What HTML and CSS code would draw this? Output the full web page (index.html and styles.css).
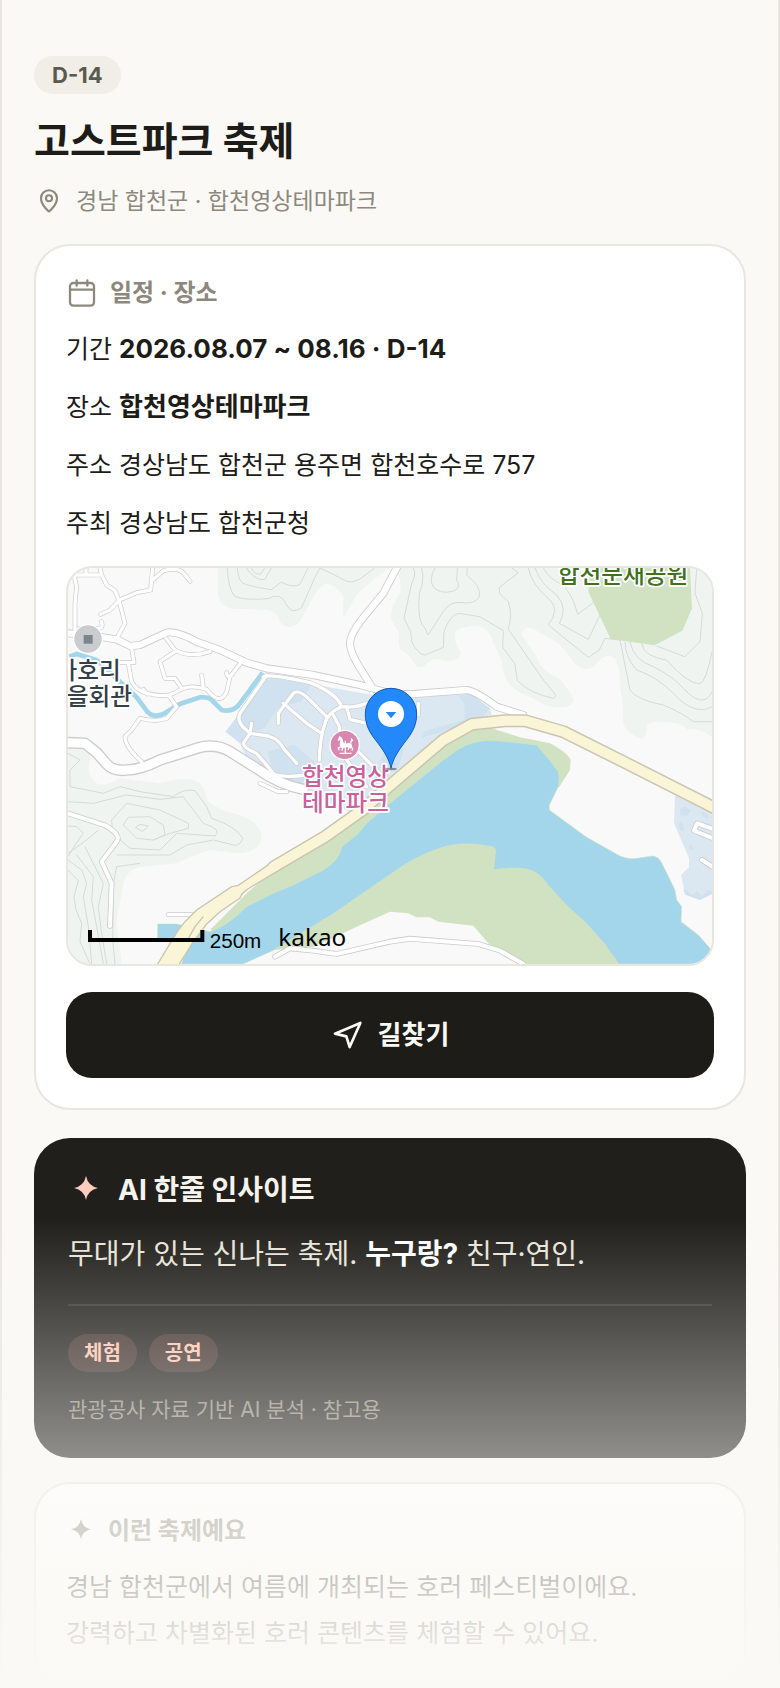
FILE: index.html
```html
<!DOCTYPE html>
<html lang="ko">
<head>
    <meta charset="UTF-8">
    <meta name="viewport" content="width=device-width, initial-scale=1.0">
    <title>고스트파크 축제</title>
    <link rel="stylesheet" href="styles.css">
</head>
<body>
    <main class="page">
        <header class="header">
            <span class="badge">D-14</span>
            <h1>고스트파크 축제</h1>
            <p class="location">
                <svg class="icon-pin" viewBox="0 0 24 24" aria-hidden="true">
                    <path d="M12 20.4s-6.4-4.9-6.4-10.6a6.4 6.4 0 0 1 12.8 0c0 5.700-6.400 10.600-6.400 10.600z"/>
                    <circle cx="12" cy="9.800" r="2.400"/>
                </svg>
                경남 합천군 · 합천영상테마파크
            </p>
        </header>

        <section class="card">
            <h2 class="card-title">
                <svg class="icon-line" viewBox="0 0 24 24" aria-hidden="true">
                    <rect x="3" y="4.500" width="18" height="17" rx="2.500"/>
                    <path d="M3 9.500h18M8 2.500v4M16 2.500v4"/>
                </svg>
                일정 · 장소
            </h2>
            <p>기간 <strong>2026.08.07 ~ 08.16 · D-14</strong></p>
            <p>장소 <strong>합천영상테마파크</strong></p>
            <p>주소 경상남도 합천군 용주면 합천호수로 757</p>
            <p>주최 경상남도 합천군청</p>

            <div class="map">
                <svg viewBox="0 0 1932 1188" preserveAspectRatio="xMidYMid slice" role="img" aria-label="지도">
                    <!-- 산지 -->
                    <g class="hill">
                        <path d="M450 0V80Q455 112 490 122L600 126Q625 130 630 150Q640 178 668 177Q690 175 705 145L736 86Q760 45 780 48Q810 55 826 86V150Q850 110 860 90Q890 50 966 0Z"/>
                        <path transform="translate(966 -24)" d="M15 24Q38 65 30 100Q-5 150 5 180L28 220Q20 260 40 275Q60 285 80 318Q95 330 110 310Q135 290 165 302Q215 305 212 275Q180 225 205 208Q240 195 262 198Q300 205 310 250L335 300Q340 360 365 380Q390 400 430 415Q470 445 510 442Q555 440 550 415Q530 375 500 350Q450 330 440 290L395 225Q405 190 430 208L490 240Q525 265 545 300Q585 350 620 310Q650 275 675 295Q692 330 690 380Q702 430 698 485Q710 520 750 535Q770 540 770 495Q790 480 830 487Q880 490 890 508Q930 505 966 530V24Z"/>
                        <path transform="translate(-24 576)" d="M24-60L60-45 90-10Q80 40 100 60Q120 90 180 55L300 70Q400 40 430 80L445 125Q480 150 520 160Q600 180 605 230Q600 280 530 280L450 270Q390 290 350 310L240 322Q190 330 185 400L170 480 185 612H24Z"/>
                    </g>
                    <g class="contour">
                        <path d="M478 0Q480 60 500 85Q530 98 600 92Q640 70 655 110Q670 140 700 120L740 30 756 0M508 0Q510 45 535 50Q570 60 610 65L640 42Q670 60 695 50L720 0M535 0Q560 38 590 35L610 0M550 0Q560 22 578 18L590 0M756 0Q800 20 825 35Q850 50 880 30L920 0"/>
                        <g transform="translate(966 -24)">
                            <path d="M70 24Q80 45 65 70L42 175 62 215 65 245Q85 285 105 285L160 262 162 215Q180 165 205 160L270 170 340 212 338 262 375 312 382 362Q420 400 490 415Q505 410 485 390L460 360 405 280 355 208Q368 165 355 125L328 100V82L385 38 365 24M135 24Q115 60 130 80Q150 105 190 93Q215 85 200 60L202 24M95 24Q105 60 88 100Q80 185 105 205L114 225 160 155Q180 125 210 127Q255 135 268 110Q275 80 230 45L232 24"/>
                            <path d="M415 24Q425 75 480 120Q510 150 475 195L595 292 628 270 645 235 690 240 720 390Q740 420 820 435Q880 460 910 485H966M435 24Q450 70 500 105Q535 145 508 190L595 238 630 165M460 24Q480 60 520 75Q550 110 563 163L610 128M705 245Q705 290 740 330Q800 350 850 400Q915 470 966 440M720 245Q730 300 790 320Q850 350 880 385Q940 450 966 395M755 250Q760 290 830 300Q890 370 930 372Q950 360 966 275M800 258L884 290 930 245 937 160 915 100 920 24"/>
                        </g>
                        <g transform="translate(-24 576)">
                            <path d="M24 -20L60 0 30 30V80L130 100 180 80 240 95 340 110Q370 85 405 92L440 140 455 175Q530 200 548 235Q540 260 520 255L460 240 380 255 330 285 170 285M24 125L100 130 200 105 300 118 370 110 430 190Q490 210 465 228L350 220 300 270 210 265Q150 220 155 180L200 130 300 150 385 190V205L330 220 280 240 230 235 190 195 205 172 270 170 310 195 315 225 280 240M226 203L240 193 265 198 248 214ZM24 198L50 200 70 220 45 255 24 290M24 280L80 240 115 210M24 330L55 362 42 410 48 450 65 490 60 545 90 612M24 300L65 330 80 370 70 410 85 500 95 612M48 282L100 350 95 420 110 500 130 612M75 260L130 370 115 440 125 520 140 612M240 310L170 320 160 370 158 540 165 612"/>
                        </g>
                    </g>
                    <path class="park" transform="translate(966 -24)" d="M600 24L595 95 662 237 793 256 877 212 906 145 900 24Z"/>

                    <!-- 호수 -->
                    <g transform="translate(966 576)">
                        <path class="park" d="M-540 510L-430 400-350 330-190 240-80 160 0 90 170-55 240-88 300-97 390-68 480-50Q535-20 542 0L540 30 508 80 300 200-300 560Z"/>
                        <path class="water shore" d="M-625 612L-600 535H-697V492H-640L-540 515Q-490 500-430 440L-350 400-290 375-200 330Q-150 300-145 260L-100 225-70 190 0 130 160 0 210-35Q260-65 330-57L440-45 470-10 505 35Q512 70 500 90L478 135V150L590 232 690 288Q720 300 740 295L790 288Q805 290 815 308L855 390 860 420 875 440 873 485 925 525 960 565V612Z"/>
                        <path class="park" d="M-440 612L-350 570-170 460 0 343Q70 290 140 267Q210 240 300 258Q318 258 318 275L312 328Q400 315 435 335Q460 350 475 375L530 435 590 490 640 545 688 612Z"/>
                        <path class="land" d="M-440 612L-345 570-230 560-100 500 0 455 55 460 80 472 120 472 145 485 250 497 297 552 330 570 412 612Z"/>
                    </g>

                    <!-- 테마파크 부지 -->
                    <path class="site" d="M600 325L850 370 966 390 1026 391 1196 376 1266 421 1271 441 1211 456 1131 500 1026 576 930 670 850 735 700 660 620 640 540 580 516 526 473 491 511 441Z"/>
                    <g class="site-dark">
                        <path d="M473 491L511 441 600 325 730 350 700 400 630 420 590 480 540 500 516 526ZM600 550L680 530 760 600 690 650 620 640ZM1170 382L1210 378 1266 421 1240 450 1130 490 1060 510 1070 490 1190 455 1190 410ZM960 520L1010 540 990 600 930 600Z"/>
                    </g>
                    <g transform="translate(966 576)">
                        <path class="site" d="M855 105L966 160V400L930 420 885 400 873 345 897 322V295L852 190Z"/>
                        <path class="site-dark" d="M870 148L885 138 903 152 890 168 872 166ZM935 155L958 165 952 177 935 168ZM865 190L875 185 883 210 872 214ZM895 265L903 250 912 272ZM880 385L895 395 910 405 920 392 935 408 955 390 966 392V402L930 420 885 404Z"/>
                    </g>

                    <path class="stream" transform="translate(-24 -24)" d="M28 290L50 282 110 300 180 365 230 412 262 455Q280 475 310 462L360 432 420 412Q450 410 460 425L485 450Q520 458 540 430L570 390 608 338"/>

                    <!-- 도로 -->
                    <defs>
                        <g id="small-roads" transform="translate(-24 -24)">
                            <path d="M45 215V130L50 80 42 45H125L120 24M78 24V45M125 45L140 75 165 92 178 125 195 190 170 235M122 163L150 150 178 120 230 98 272 90 278 24M278 60L310 32Q350 20 370 38L390 64M60 205H115Q132 205 124 185M215 265L222 308H180M205 310L212 350Q215 385 260 400Q300 410 330 405L370 385Q400 375 440 388Q480 440 500 395L510 350 540 312M425 345L430 385M250 388L262 402M318 235L345 270Q390 295 450 275M345 275L300 305 315 355H345L362 380M325 405L350 440 320 475Q290 487 240 475L215 510 195 530Q195 560 245 605M500 338Q500 355 515 345"/>
                            <path d="M620 345L540 460Q530 480 550 502L570 520 550 550Q550 565 590 580L640 640Q660 655 740 645M610 350Q630 340 750 368Q830 400 845 440Q800 460 795 490Q780 530 778 600M845 440Q880 445 920 430M860 440L870 478 920 490M820 465L838 500V520M655 490V460L700 400Q715 385 750 420L800 470M670 430L740 490 785 520M575 490L570 520 625 528Q660 540 670 565L710 610M880 560L970 650M860 600L920 680"/>
                            <path d="M325 1064H400M600 670L655 695H680M1075 430V465"/>
                        </g>
                        <g id="mid-roads">
                            <path transform="translate(-24 576)" d="M24 160L135 196Q185 225 170 245L125 305 155 370 150 498"/>
                            <path transform="translate(966 576)" d="M-345 590L-300 565-230 572-160 582 0 545 60 536 265 552 330 572 400 612"/>
                            <path transform="translate(966 576)" d="M970 235L912 212 922 190 970 207M936 300L970 322"/>
                        </g>
                        <path id="main-road" transform="translate(-24 -24)" d="M24 220L130 232 170 238 210 258 240 255 320 218Q350 212 410 245L480 270 560 308 620 325 760 345 900 375 990 400 1050 403 1220 390Q1250 395 1310 440L1390 465M1010 24L970 100 920 160Q870 220 870 250T910 340L935 380"/>
                        <path id="wide-road" transform="translate(-24 576)" d="M0-53L75-50 110-22 140 12Q160 35 200 30Q240 30 300 0L420-38Q470-50 510-25L590 25Q660 75 730 88"/>
                        <path id="highway" transform="translate(966 576)" d="M-350 321L-195 230-80 148 0 76 160-60 245-107 345-118H405L520-85 690 0 980 147"/>
                    </defs>
                    <use class="road-case w-small" href="#small-roads"/>
                    <use class="road-case w-mid" href="#mid-roads"/>
                    <use class="road-case w-main" href="#main-road"/>
                    <use class="road-case w-wide" href="#wide-road"/>
                    <use class="road small" href="#small-roads"/>
                    <use class="road mid" href="#mid-roads"/>
                    <use class="road main" href="#main-road"/>
                    <use class="road wide" href="#wide-road"/>
                    <use class="highway-case" href="#highway"/>
                    <path class="highway-area" transform="translate(-24 576)" d="M285 625L355 510 375 485 410 450 515 380 535 376 640 304 660 329 560 389 546 402 540 414 480 455 440 492 400 545 350 625M380 545L405 500 430 470"/>
                    <use class="highway" href="#highway"/>

                    <!-- 지명 -->
                    <g class="place">
                        <circle class="poi-gray" cx="60" cy="213" r="43"/>
                        <path class="poi-square" d="M47 201h27v26h-27z"/>
                        <text class="label-gray" x="158" y="332" text-anchor="end">가호리</text>
                        <text class="label-gray" x="192" y="410" text-anchor="end">마을회관</text>
                        <text class="label-green" x="1469" y="44">합천문재공원</text>
                        <circle class="poi-pink" cx="830" cy="531" r="44"/>
                        <g class="poi-horse" transform="translate(576 306)">
                            <path class="horse-body" d="M233 209L236 203 239 197 243 202Q250 205 249 216L256 221 267 218Q277 219 276 230L272 236 264 231 247 235Q239 232 239 222L241 210 235 213Z"/>
                            <path class="horse-line" d="M242 230L235 234 238 241M248 233L246 242M266 230L265 240M273 230L278 236 276 242M272 220L275 208 279 213M256 212V249M239 250H275"/>
                        </g>
                        <text class="label-pink" x="702" y="650">합천영상</text>
                        <text class="label-pink" x="702" y="729">테마파크</text>
                    </g>
                    <g transform="translate(576 306)">
                        <ellipse class="pin-shadow" cx="393" cy="297" rx="18" ry="4"/>
                        <path class="pin" d="M393 295C387 265 370 240 345 208C325 182 316 160 316 132A77 77 0 1 1 470 132C470 160 461 182 441 208C416 240 399 265 393 295Z"/>
                        <circle class="pin-hole" cx="393" cy="132" r="39"/>
                        <path class="pin-arrow" d="M377 126H409L393 145Z"/>
                    </g>
                    <g transform="translate(-24 576)">
                        <path class="scale-bar" d="M90 510V540H427V510"/>
                        <text class="scale-text" x="449" y="564">250m</text>
                        <text class="map-logo" x="655" y="557">kakao</text>
                    </g>
                </svg>
            </div>

            <button type="button" class="route-btn">
                <svg class="icon-line" viewBox="0 0 24 24" aria-hidden="true">
                    <path d="M3 11L22 3l-8 18-2.500-8z"/>
                </svg>
                길찾기
            </button>
        </section>

        <section class="insight">
            <h2 class="insight-title">
                <svg class="icon-star" viewBox="0 0 36 36" aria-hidden="true">
                    <path d="M18 4q2 10 12 12q-10 2-12 12q-2-10-12-12q10-2 12-12z"/>
                </svg>
                AI 한줄 인사이트
            </h2>
            <p class="insight-text">무대가 있는 신나는 축제. <strong>누구랑?</strong> 친구·연인.</p>
            <div class="tags">
                <span class="tag">체험</span>
                <span class="tag">공연</span>
            </div>
            <p class="insight-note">관광공사 자료 기반 AI 분석 · 참고용</p>
        </section>

        <section class="card">
            <h2 class="card-title">
                <svg class="icon-star" viewBox="0 0 36 36" aria-hidden="true">
                    <path d="M18 4q2 10 12 12q-10 2-12 12q-2-10-12-12q10-2 12-12z"/>
                </svg>
                이런 축제예요
            </h2>
            <div class="desc">
                경남 합천군에서 여름에 개최되는 호러 페스티벌이에요.<br>
                강력하고 차별화된 호러 콘텐츠를 체험할 수 있어요.
            </div>
        </section>
        <div class="fade"></div>
    </main>
</body>
</html>
```
FILE: styles.css
```css
* {
    margin: 0;
    padding: 0;
    box-sizing: border-box;
}
body {
    font-family: Inter, "Noto Sans CJK KR", sans-serif;
    background-color: #faf9f5;
    color: #1d1c18;
}
strong {
    line-height: 1;
}
.page {
    position: relative;
    padding: 56px 32px 0;
    border-left: 2px solid #e8e6df;
    border-right: 2px solid #e8e6df;
}
.header {
    display: flex;
    flex-direction: column;
    align-items: flex-start;
    margin-bottom: 26px;
}
.badge {
    height: 38px;
    padding: 0 18px;
    border-radius: 19px;
    background-color: #f0eee6;
    color: #5c5950;
    font-size: 22px;
    font-weight: 700;
    line-height: 38px;
}
h1 {
    margin-top: 22px;
    font-size: 39px;
    font-weight: 700;
    line-height: 50px;
}
.location {
    display: flex;
    align-items: center;
    gap: 12px;
    margin-top: 18px;
    color: #8c887d;
    font-size: 23px;
    line-height: 34px;
}
.location svg {
    width: 30px;
    height: 30px;
}
.icon-pin, .icon-line {
    fill: none;
    stroke: currentColor;
    stroke-width: 2;
    stroke-linecap: round;
    stroke-linejoin: round;
}
.icon-pin {
    stroke-width: 1.7;
}
.card {
    padding: 30px;
    border: 2px solid #e8e6df;
    border-radius: 36px;
    background-color: #fff;
    font-size: 25px;
    line-height: 46px;
}
.card .icon-line {
    width: 32px;
    height: 32px;
}
.card .icon-star {
    width: 30px;
    height: 30px;
}
.card-title {
    display: flex;
    align-items: center;
    gap: 12px;
    margin-bottom: 16px;
    color: #8c887d;
    font-size: 24px;
    font-weight: 700;
    line-height: 34px;
}
.card-title .icon-line {
    stroke-width: 1.7;
}
.card p {
    margin-bottom: 12px;
}
.card strong {
    font-size: 26px;
}
.map {
    height: 400px;
    margin-top: 20px;
    border: 2px solid #e8e6df;
    border-radius: 26px;
    background-color: #f9f9f9;
    overflow: hidden;
}
.map svg {
    display: block;
    width: 100%;
    height: 100%;
}
.hill {
    fill: #eff4f1;
}
.contour {
    fill: none;
    stroke: #d5dad7;
    stroke-width: 3;
}
.park {
    fill: #d0e2c2;
}
.water {
    fill: #a3d6eb;
}
.shore {
    stroke: #d0e2c2;
    stroke-width: 2;
}
.land {
    fill: #f9f9f9;
}
.site {
    fill: #dce8f1;
}
.site-dark {
    fill: #d0e2ef;
}
.stream {
    fill: none;
    stroke: #a3d6eb;
    stroke-width: 14;
}
.road, .road-case, .highway, .highway-case {
    fill: none;
    stroke-linecap: round;
    stroke-linejoin: round;
}
.road-case {
    stroke: #cccccc;
}
.road {
    stroke: #ffffff;
}
.w-small {
    stroke-width: 14;
}
.small {
    stroke-width: 10;
}
.w-mid {
    stroke-width: 17;
}
.mid {
    stroke-width: 12;
}
.w-main {
    stroke-width: 24;
}
.main {
    stroke-width: 19;
}
.w-wide {
    stroke-width: 35;
}
.wide {
    stroke-width: 27;
}
.highway-case {
    stroke: #cbc4b0;
    stroke-width: 39;
}
.highway {
    stroke: #faf5d7;
    stroke-width: 30;
}
.highway-area {
    fill: #faf5d7;
    stroke: #cbc4b0;
    stroke-width: 4;
}
.place text {
    font-family: "Noto Sans CJK KR", sans-serif;
    font-size: 71px;
    font-weight: 500;
    paint-order: stroke;
    stroke: #ffffff;
    stroke-width: 10;
    stroke-linejoin: round;
}
.poi-gray {
    fill: #cbccd0;
    stroke: #ffffff;
    stroke-width: 4;
}
.poi-square {
    fill: #7b868c;
}
.poi-pink {
    fill: #d888b0;
    stroke: #ffffff;
    stroke-width: 4;
}
.horse-body {
    fill: #ffffff;
}
.horse-line {
    fill: none;
    stroke: #ffffff;
    stroke-width: 4;
}
.label-gray {
    fill: #343f47;
}
.label-green {
    fill: #42701f;
}
.label-pink {
    fill: #c9619a;
}
.pin-shadow {
    fill: #00000066;
}
.pin {
    fill: #2389fb;
    stroke: #1458b8;
    stroke-width: 3;
}
.pin-hole {
    fill: #ffffff;
}
.pin-arrow {
    fill: #2389fb;
}
.scale-bar {
    fill: none;
    stroke: #000000;
    stroke-width: 12;
}
.scale-text {
    font-family: "Liberation Sans", Arial, sans-serif;
    font-size: 62px;
}
.map-logo {
    font-family: "Noto Sans", sans-serif;
    font-size: 73px;
    font-weight: 400;
}
.route-btn {
    display: flex;
    align-items: center;
    justify-content: center;
    gap: 15px;
    width: 100%;
    height: 86px;
    margin-top: 26px;
    border: none;
    border-radius: 26px;
    background-color: #1d1c18;
    color: #faf9f5;
    font-family: inherit;
    font-size: 26px;
    font-weight: 700;
    line-height: 40px;
    cursor: pointer;
}
.insight {
    margin: 28px 0 24px;
    padding: 34px;
    border-radius: 36px;
    background-color: #201f1b;
}
.insight-title {
    display: flex;
    align-items: center;
    gap: 14px;
    color: #f5f3ec;
    font-size: 28px;
    font-weight: 700;
    line-height: 36px;
}
.icon-star {
    width: 36px;
    height: 36px;
    fill: currentColor;
}
.insight .icon-star {
    fill: #ffcdbf;
}
.insight-text {
    margin-top: 22px;
    color: #e8e4d9;
    font-size: 28px;
    line-height: 48px;
}
.insight-text strong {
    color: #ffffff;
}
.tags {
    display: flex;
    gap: 12px;
    margin-top: 26px;
    padding-top: 28px;
    border-top: 2px solid #363531;
}
.tag {
    height: 38px;
    padding: 0 16px;
    border-radius: 19px;
    background-color: #3f302b;
    color: #ffc4b2;
    font-size: 20px;
    font-weight: 600;
    line-height: 38px;
}
.insight-note {
    margin-top: 24px;
    color: #8c887d;
    font-size: 21px;
    line-height: 28px;
}
/* 하단으로 갈수록 내용을 가리는 그라데이션 */
.fade {
    position: absolute;
    right: -2px;
    bottom: 0;
    left: -2px;
    height: 470px;
    background: linear-gradient(#faf9f500, #faf9f5);
    pointer-events: none;
}
```
